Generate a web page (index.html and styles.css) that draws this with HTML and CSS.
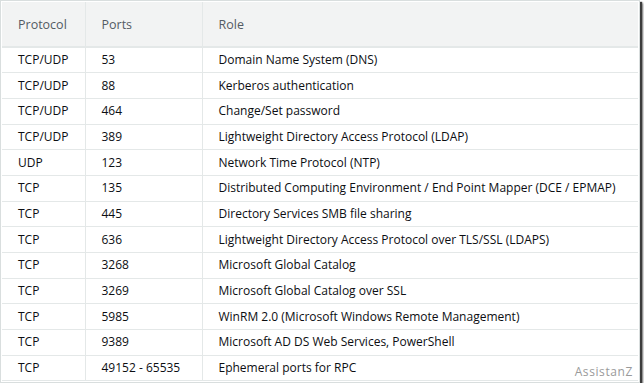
FILE: index.html
```html
<!DOCTYPE html>
<html lang="en">

<head>
	<meta charset="UTF-8">
	<title>Ports</title>
	<link rel="stylesheet" href="styles.css">
</head>

<body>
	<div class="shot">
		<table class="ports">
			<thead>
				<tr>
					<th class="col-proto">Protocol</th>
					<th class="col-port">Ports</th>
					<th>Role</th>
				</tr>
			</thead>
			<tbody>
				<tr><td>TCP/UDP</td><td>53</td><td>Domain Name System (DNS)</td></tr>
				<tr><td>TCP/UDP</td><td>88</td><td>Kerberos authentication</td></tr>
				<tr><td>TCP/UDP</td><td>464</td><td>Change/Set password</td></tr>
				<tr><td>TCP/UDP</td><td>389</td><td>Lightweight Directory Access Protocol (LDAP)</td></tr>
				<tr><td>UDP</td><td>123</td><td>Network Time Protocol (NTP)</td></tr>
				<tr><td>TCP</td><td>135</td><td>Distributed Computing Environment / End Point Mapper (DCE / EPMAP)</td></tr>
				<tr><td>TCP</td><td>445</td><td>Directory Services SMB file sharing</td></tr>
				<tr><td>TCP</td><td>636</td><td>Lightweight Directory Access Protocol over TLS/SSL (LDAPS)</td></tr>
				<tr><td>TCP</td><td>3268</td><td>Microsoft Global Catalog</td></tr>
				<tr><td>TCP</td><td>3269</td><td>Microsoft Global Catalog over SSL</td></tr>
				<tr><td>TCP</td><td>5985</td><td>WinRM 2.0 (Microsoft Windows Remote Management)</td></tr>
				<tr><td>TCP</td><td>9389</td><td>Microsoft AD DS Web Services, PowerShell</td></tr>
				<tr><td>TCP</td><td>49152 - 65535</td><td>Ephemeral ports for RPC</td></tr>
			</tbody>
		</table>
		<span class="mark">AssistanZ</span>
	</div>
</body>

</html>
```

FILE: styles.css
```css
* {
	box-sizing: border-box;
}

body {
	margin: 0;
	background-color: #ffffff;
	font-family: 'Open Sans', sans-serif;
}

.shot {
	position: relative;
	width: 640px;
	height: 383px;
	padding: 1px;
	border: 1px solid #d9dede;
	background-color: #ffffff;
	box-shadow: 2px 2px 1px #3c3c3c, 3px 3px 2px #7a7a7a;
}

.ports {
	width: 100%;
	table-layout: fixed;
	border-collapse: collapse;
	font-size: 12px;
	color: #0c0e12;
}

.ports th,
.ports td {
	text-align: left;
	padding: 0 0 1px 16px;
	border-bottom: 1px solid #e4e8e8;
	border-left: 1px solid #e4e8e8;
	white-space: nowrap;
}

.ports th:first-child,
.ports td:first-child {
	border-left: none;
}

.ports th {
	height: 45px;
	padding-top: 1px;
	font-size: 12.5px;
	background-color: #f2f3f3;
	color: #545b64;
	font-weight: 400;
	border-bottom: 2px solid #e4e8e8;
}

.ports td {
	height: 25.7px;
}

.col-proto {
	width: 83px;
}

.col-port {
	width: 117px;
}

.mark {
	position: absolute;
	right: 6px;
	bottom: 2px;
	font-size: 12px;
	color: #9a9a9a;
	letter-spacing: 0.6px;
}
```
